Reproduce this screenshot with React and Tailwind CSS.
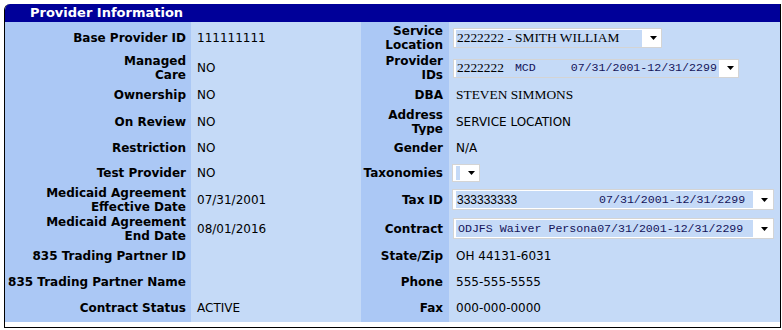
import React from "react";

const Arrow = () => (
  <svg width="7" height="4" viewBox="0 0 7 4" className="shrink-0">
    <polygon points="0,0 7,0 3.5,4" fill="#000" />
  </svg>
);

const Label = ({ children }) => (
  <div className="bg-[#abc8f5] flex items-center justify-end text-right pr-[5px] font-bold text-[12px] leading-[14px] text-black" style={{}}>
    <div>{children}</div>
  </div>
);

const LabelR = ({ children }) => (
  <div className="bg-[#abc8f5] flex items-center justify-end text-right pr-[6px] font-bold text-[12px] leading-[14px] text-black">
    <div>{children}</div>
  </div>
);

const Val = ({ children }) => (
  <div className="bg-[#c5daf7] flex items-center pl-[6px] text-[12px] text-black">{children}</div>
);

const ValR = ({ children, pl = "pl-[7px]" }) => (
  <div className={`bg-[#c5daf7] flex items-center text-[12px] text-black ${pl}`}>{children}</div>
);

const mono = "font-['Liberation_Mono',monospace] text-[11.6px] text-[#14145a]";

export default function App() {
  const rows = [
    "h-[32px]", "h-[28px]", "h-[26px]", "h-[27px]", "h-[25px]", "h-[25px]",
    "h-[29px]", "h-[29px]", "h-[26px]", "h-[25px]", "h-[28px]",
  ];
  return (
    <div className="w-[782px] h-[330px] bg-white pt-[4px] pl-[4px] font-['DejaVu_Sans',sans-serif]">
      <div className="w-[777px] h-[324px] border-l border-r border-b border-black rounded-tl-[6px] overflow-hidden flex flex-col">
        <div className="h-[18px] bg-[#000099] text-white font-bold text-[13px] leading-[18px] pl-[25px]">
          Provider Information
        </div>
        <div className="grid grid-cols-[186px_170px_88px_331px] grid-rows-[32px_28px_26px_27px_25px_25px_29px_29px_26px_25px_28px]">
          {/* row 1 */}
          <Label>Base Provider ID</Label>
          <Val>111111111</Val>
          <LabelR>Service<br />Location</LabelR>
          <ValR pl="pl-[4px]">
            <div className="w-[209px] h-[20px] bg-white border border-[#d4d4d4] flex items-center pl-[2px] pr-[4px]">
              <div className="w-[186px] h-[17px] bg-[#c5daf7] flex items-center pl-[1px] font-['Liberation_Serif',serif] text-[13.4px] leading-none">
                2222222 - SMITH WILLIAM
              </div>
              <div className="flex-1" />
              <Arrow />
            </div>
          </ValR>

          {/* row 2 */}
          <Label>Managed<br />Care</Label>
          <Val>NO</Val>
          <LabelR>Provider<br />IDs</LabelR>
          <ValR pl="pl-[4px]">
            <div className="w-[286px] h-[19px] bg-white border border-[#d4d4d4] flex items-center pl-[2px] pr-[4px]">
              <div className="w-[263px] h-[17px] bg-[#c5daf7] flex items-center pl-[1px] whitespace-pre">
                <span className="font-['Liberation_Serif',serif] text-[13.4px] leading-none">2222222</span>
                <span className={`${mono} ml-[11px]`}>MCD</span>
                <span className={`${mono} ml-[35px]`}>07/31/2001-12/31/2299</span>
              </div>
              <div className="flex-1" />
              <Arrow />
            </div>
          </ValR>

          {/* row 3 */}
          <Label>Ownership</Label>
          <Val>NO</Val>
          <LabelR>DBA</LabelR>
          <ValR>
            <span className="font-['Liberation_Serif',serif] text-[13.4px]">STEVEN SIMMONS</span>
          </ValR>

          {/* row 4 */}
          <Label>On Review</Label>
          <Val>NO</Val>
          <LabelR>Address<br />Type</LabelR>
          <ValR>SERVICE LOCATION</ValR>

          {/* row 5 */}
          <Label>Restriction</Label>
          <Val>NO</Val>
          <LabelR>Gender</LabelR>
          <ValR>N/A</ValR>

          {/* row 6 */}
          <Label>Test Provider</Label>
          <Val>NO</Val>
          <LabelR>Taxonomies</LabelR>
          <ValR pl="pl-[3px]">
            <div className="w-[28px] h-[18px] bg-white border border-[#d4d4d4] flex items-center pl-[3px] pr-[4px]">
              <div className="w-[4px] h-[14px] bg-[#c5daf7]" />
              <div className="flex-1" />
              <Arrow />
            </div>
          </ValR>

          {/* row 7 */}
          <Label>Medicaid Agreement<br />Effective Date</Label>
          <Val>07/31/2001</Val>
          <LabelR>Tax ID</LabelR>
          <ValR pl="pl-[3px]">
            <div className="w-[322px] h-[21px] bg-white border border-[#d4d4d4] flex items-center pl-[3px] pr-[5px]">
              <div className="w-[297px] h-[17px] bg-[#c5daf7] flex items-center pl-[1px] whitespace-pre">
                <span className="font-['Liberation_Sans',sans-serif] text-[12px] leading-none">333333333</span>
                <span className={`${mono} ml-[82px]`}>07/31/2001-12/31/2299</span>
              </div>
              <div className="flex-1" />
              <Arrow />
            </div>
          </ValR>

          {/* row 8 */}
          <Label>Medicaid Agreement<br />End Date</Label>
          <Val>08/01/2016</Val>
          <LabelR>Contract</LabelR>
          <ValR pl="pl-[4px]">
            <div className="w-[321px] h-[21px] bg-white border border-[#d4d4d4] flex items-center pl-[2px] pr-[5px]">
              <div className="w-[297px] h-[17px] bg-[#c5daf7] flex items-center pl-[2px] whitespace-pre">
                <span className={mono}>ODJFS Waiver Persona07/31/2001-12/31/2299</span>
              </div>
              <div className="flex-1" />
              <Arrow />
            </div>
          </ValR>

          {/* row 9 */}
          <Label>835 Trading Partner ID</Label>
          <Val></Val>
          <LabelR>State/Zip</LabelR>
          <ValR>OH 44131-6031</ValR>

          {/* row 10 */}
          <Label>835 Trading Partner Name</Label>
          <Val></Val>
          <LabelR>Phone</LabelR>
          <ValR>555-555-5555</ValR>

          {/* row 11 */}
          <Label>Contract Status</Label>
          <Val>ACTIVE</Val>
          <LabelR>Fax</LabelR>
          <ValR>000-000-0000</ValR>
        </div>
        <div className="flex-1 bg-white" />
      </div>
    </div>
  );
}
